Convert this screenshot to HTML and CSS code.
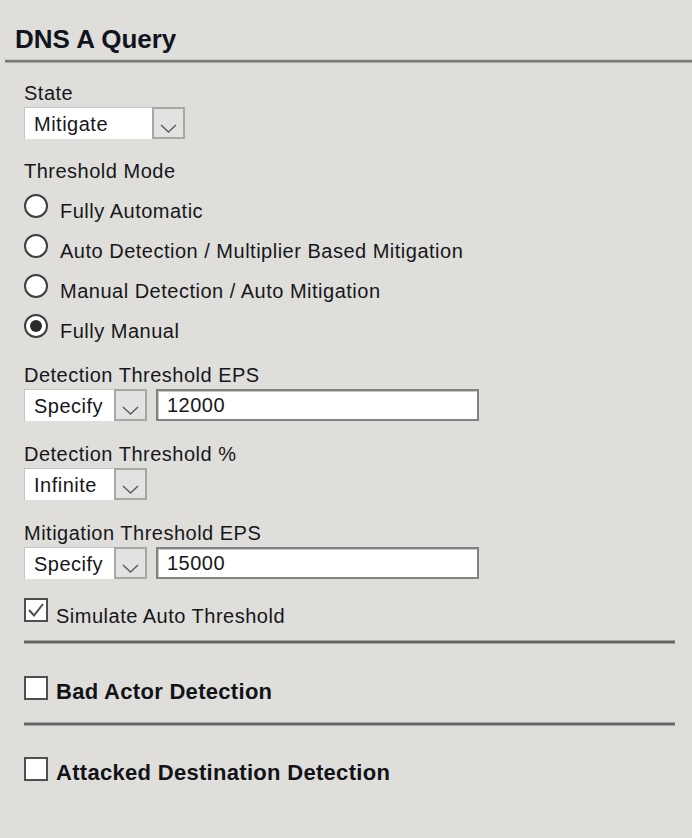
FILE: index.html
```html
<!DOCTYPE html>
<html>
<head>
<meta charset="utf-8">
<link rel="stylesheet" href="styles.css">
</head>
<body>
<div class="panel">
  <h1 class="title">DNS A Query</h1>
  <div class="title-rule"></div>
  <div class="content">
    <div class="field field-state">
      <div class="label">State</div>
      <div class="select select-wide">
        <span class="select-value">Mitigate</span>
        <span class="select-btn"><svg width="17" height="9" viewBox="0 0 17 9"><polyline points="1,1 8.5,8 16,1" fill="none" stroke="#5a5a5a" stroke-width="1.4"/></svg></span>
      </div>
    </div>

    <div class="group">
      <div class="label">Threshold Mode</div>
      <div class="radios">
        <div class="radio-row"><span class="radio"></span><span class="option-text">Fully Automatic</span></div>
        <div class="radio-row"><span class="radio"></span><span class="option-text">Auto Detection / Multiplier Based Mitigation</span></div>
        <div class="radio-row"><span class="radio"></span><span class="option-text">Manual Detection / Auto Mitigation</span></div>
        <div class="radio-row"><span class="radio radio-on"><span class="radio-dot"></span></span><span class="option-text">Fully Manual</span></div>
      </div>
    </div>

    <div class="field field-eps">
      <div class="label">Detection Threshold EPS</div>
      <div class="control-row">
        <div class="select select-narrow">
          <span class="select-value">Specify</span>
          <span class="select-btn"><svg width="17" height="9" viewBox="0 0 17 9"><polyline points="1,1 8.5,8 16,1" fill="none" stroke="#5a5a5a" stroke-width="1.4"/></svg></span>
        </div>
        <div class="text-input">12000</div>
      </div>
    </div>

    <div class="field">
      <div class="label">Detection Threshold %</div>
      <div class="select select-narrow">
        <span class="select-value">Infinite</span>
        <span class="select-btn"><svg width="17" height="9" viewBox="0 0 17 9"><polyline points="1,1 8.5,8 16,1" fill="none" stroke="#5a5a5a" stroke-width="1.4"/></svg></span>
      </div>
    </div>

    <div class="field">
      <div class="label">Mitigation Threshold EPS</div>
      <div class="control-row">
        <div class="select select-narrow">
          <span class="select-value">Specify</span>
          <span class="select-btn"><svg width="17" height="9" viewBox="0 0 17 9"><polyline points="1,1 8.5,8 16,1" fill="none" stroke="#5a5a5a" stroke-width="1.4"/></svg></span>
        </div>
        <div class="text-input">15000</div>
      </div>
    </div>

    <div class="check-row check-simulate">
      <span class="checkbox"><svg width="20" height="20" viewBox="0 0 20 20"><polyline points="3,10 8,15.5 17,4" fill="none" stroke="#4a4a4a" stroke-width="2"/></svg></span>
      <span class="option-text check-text">Simulate Auto Threshold</span>
    </div>
    <div class="separator sep-1"></div>
    <div class="check-row check-section check-bad">
      <span class="checkbox"></span>
      <span class="section-text">Bad Actor Detection</span>
    </div>
    <div class="separator sep-2"></div>
    <div class="check-row check-section check-attacked">
      <span class="checkbox"></span>
      <span class="section-text">Attacked Destination Detection</span>
    </div>
  </div>
</div>
</body>
</html>
```

FILE: styles.css
```css
html, body {
  margin: 0;
  padding: 0;
}

body {
  background: #dfdeda;
  font-family: "Liberation Sans", Arial, sans-serif;
  color: #16171c;
  width: 692px;
  height: 838px;
  overflow: hidden;
}

.panel {
  width: 692px;
}

.title {
  margin: 24px 0 0;
  padding-left: 15px;
  font-size: 26px;
  line-height: 30px;
  font-weight: bold;
  color: #11141d;
}

.title-rule {
  margin: 6px 0 0 5px;
  height: 2px;
  background: #7a7a7a;
  box-shadow: 0 -1px 0 #c9c8c4, 0 1px 0 #a9a8a5;
}

.content {
  padding: 0 17px 0 24px;
}

.label,
.option-text,
.select-value,
.text-input {
  font-size: 20px;
  line-height: 22px;
  letter-spacing: 0.5px;
}

.field {
  margin-top: 22px;
}

.field-state {
  margin-top: 20px;
}

.field-eps {
  margin-top: 13px;
}

.group {
  margin-top: 21px;
}

.select {
  margin-top: 3px;
  height: 32px;
  box-sizing: border-box;
  display: flex;
  background: #fff;
  border-top: 1px solid #c4c4c4;
  border-left: 1px solid #c4c4c4;
}

.select-wide {
  width: 161px;
}

.select-narrow {
  width: 123px;
}

.select-value {
  flex: 1;
  display: flex;
  align-items: center;
  padding-left: 9px;
}

.select-btn {
  width: 33px;
  box-sizing: border-box;
  background: #e2e2e1;
  border: 2px solid #a7a7a7;
  margin-top: -1px;
  display: flex;
  justify-content: center;
  padding-top: 15px;
}

.select-btn svg {
  display: block;
}

.control-row {
  display: flex;
  align-items: flex-start;
}

.control-row .select {
  margin-top: 3px;
}

.text-input {
  margin: 3px 0 0 9px;
  width: 323px;
  height: 32px;
  box-sizing: border-box;
  background: #fff;
  border: 2px solid #828282;
  box-shadow: inset 1px 1px 0 #c8c8c8;
  padding-left: 9px;
  display: flex;
  align-items: center;
}

.radios {
  margin-top: 9px;
}

.radio-row {
  height: 40px;
  display: flex;
  align-items: flex-start;
  gap: 12px;
}

.radio {
  margin-top: 3px;
  width: 24px;
  height: 24px;
  box-sizing: border-box;
  border-radius: 50%;
  border: 2px solid #3e3e3e;
  background: #fff;
  display: flex;
  align-items: center;
  justify-content: center;
  flex: none;
}

.radio-dot {
  width: 12px;
  height: 12px;
  border-radius: 50%;
  background: #2b2b2b;
}

.radio-row .option-text {
  margin-top: 9px;
}

.check-row {
  display: flex;
  align-items: flex-start;
  gap: 8px;
}

.check-simulate {
  margin-top: 19px;
}

.checkbox {
  width: 24px;
  height: 24px;
  box-sizing: border-box;
  border: 2px solid #4f4f4f;
  background: #fff;
  flex: none;
  display: flex;
  align-items: center;
  justify-content: center;
}

.checkbox svg {
  display: block;
}

.check-text {
  margin-top: 7px;
}

.separator {
  height: 2px;
  background: #666;
  box-shadow: 0 -1px 0 #a4a4a2, 0 1px 0 #a4a4a2;
}

.sep-1 {
  margin-top: 14px;
}

.sep-2 {
  margin-top: 19px;
}

.check-bad {
  margin-top: 33px;
}

.check-attacked {
  margin-top: 32px;
}

.section-text {
  margin-top: 4px;
  font-size: 22px;
  line-height: 24px;
  font-weight: bold;
  letter-spacing: 0.3px;
  color: #111318;
}
```
